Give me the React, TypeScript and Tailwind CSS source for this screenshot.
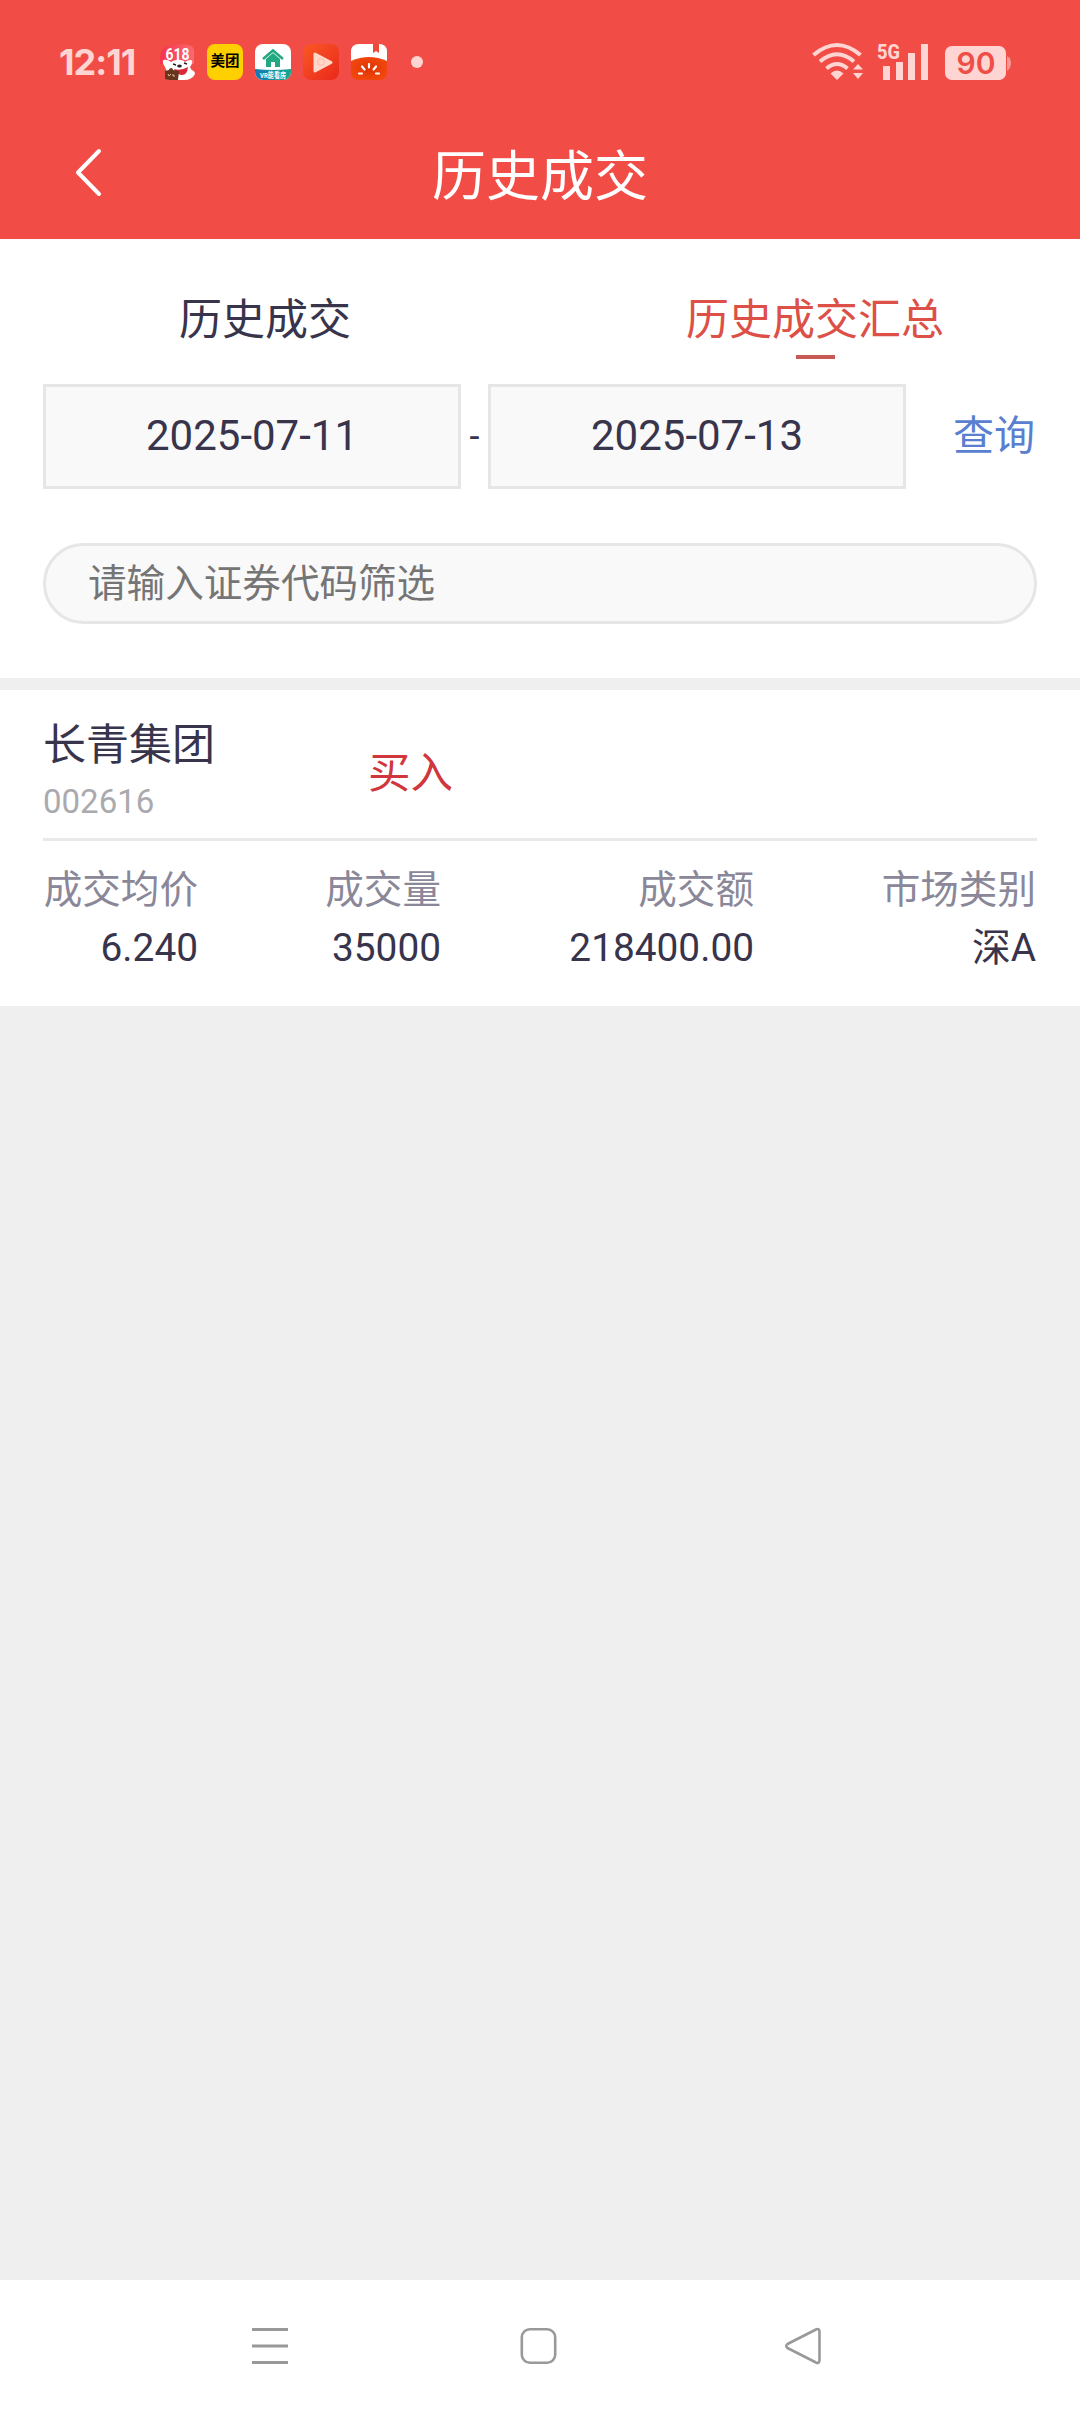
import { useState } from "react";

interface Trade {
  name: string;
  code: string;
  side: string;
  avgPrice: string;
  volume: string;
  amount: string;
  market: string;
}

const TABS = ["历史成交", "历史成交汇总"];

const trades: Trade[] = [
  {
    name: "长青集团",
    code: "002616",
    side: "买入",
    avgPrice: "6.240",
    volume: "35000",
    amount: "218400.00",
    market: "深A",
  },
];

const AppIcons = () => (
  <div className="flex gap-3">
    <svg width="36" height="36" viewBox="0 0 36 36">
      <defs>
        <linearGradient id="sale" x1="0" y1="0" x2="1" y2="0">
          <stop offset="0" stopColor="#f5324c" />
          <stop offset="1" stopColor="#fb6a70" />
        </linearGradient>
      </defs>
      <path d="M8 2Q18-1 29 1Q36 2 35 10V20H1Q0 5 8 2Z" fill="url(#sale)" />
      <path d="M6 23C0 14 8 15 12 18C17 15 23 15 26 18C32 14 36 16 31 23C32 27 36 26 36 30Q33 36 25 36H10Q5 34 8 28Z" fill="#fff" />
      <text x="18.500" y="16" textAnchor="middle" fontSize="16" fontWeight="700" fill="#fff" textLength="24" lengthAdjust="spacingAndGlyphs" className="font-['Roboto']">618</text>
      <ellipse cx="20.500" cy="22" rx="2.300" ry="1.500" fill="#222" />
      <path d="M14 20l3 1M25 19l3 1" stroke="#222" strokeWidth="1.400" />
      <path d="M15 25Q22 27 29 23Q28 32 22 31Q17 30 15 25Z" fill="#dd2836" />
      <path d="M6 27l4-1q0-2 3-2l1 2 6 1-1 9q-7 1-13-1Z" fill="#65351e" />
      <path d="M9 30l1 2 2-2m2 0v2h2" fill="none" stroke="#e8bd91" />
    </svg>
    <div className="flex h-9 w-9 items-center justify-center rounded-[8px] bg-[#ffd000] text-[14.500px] leading-none font-bold text-black">
      美团
    </div>
    <svg width="36" height="36" viewBox="0 0 36 36">
      <defs>
        <linearGradient id="vr">
          <stop offset="0" stopColor="#1777b4" />
          <stop offset="1" stopColor="#15a88e" />
        </linearGradient>
        <clipPath id="round"><rect width="36" height="36" rx="8" /></clipPath>
      </defs>
      <g clipPath="url(#round)">
        <rect width="36" height="36" fill="#fff" />
        <path d="M0 25Q18 27 36 25V36H0Z" fill="url(#vr)" />
        <path d="M8 15L18 6.500L28 15" fill="none" stroke="#22a982" strokeWidth="2.500" />
        <path d="M11 15L18 9L25 15V23H20V18H16V23H11Z" fill="#22a982" />
        <text x="18" y="34" textAnchor="middle" fontSize="7.500" fontWeight="700" fill="#fff" textLength="26" lengthAdjust="spacingAndGlyphs">VR能看房</text>
      </g>
    </svg>
    <svg width="36" height="36" viewBox="0 0 36 36">
      <defs>
        <linearGradient id="play" x1="0" y1="0" x2="1" y2="1">
          <stop offset="0" stopColor="#fa5825" />
          <stop offset="1" stopColor="#e9281c" />
        </linearGradient>
      </defs>
      <rect width="36" height="36" rx="8" fill="url(#play)" />
      <path d="M12 10V27L28 18.500Z" fill="#ffd8ca" stroke="#ffd8ca" strokeWidth="3" strokeLinejoin="round" />
      <circle cx="18" cy="18" r="3.500" fill="none" stroke="#ffb9a6" />
    </svg>
    <svg width="36" height="36" viewBox="0 0 36 36">
      <defs>
        <radialGradient id="tomato">
          <stop offset="0" stopColor="#df3200" />
          <stop offset="1" stopColor="#f0470e" />
        </radialGradient>
      </defs>
      <path d="M0 18V8Q0 0 8 0H28Q36 0 36 8V18Z" fill="#fff" />
      <path d="M0 17Q18 9 36 17V28Q36 36 28 36H8Q0 36 0 28Z" fill="url(#tomato)" />
      <path d="M22 0H28V9L25 7L22 9Z" fill="#ed4b36" />
      <path d="M8 29.500H11M25 29.500H28M11 22.500L13.500 25.500M25 22.500L22.500 25.500M18 20V23.500" stroke="#fff" strokeWidth="2.200" strokeLinecap="round" />
    </svg>
  </div>
);

const StatusBar = () => (
  <div className="flex h-[124px] items-center pr-[68px] pl-[59px] text-[#ffd5d3]">
    <span className="w-[100px] font-['Inter'] text-[36px] leading-none font-bold tracking-[-1px]">
      12:11
    </span>
    <AppIcons />
    <span className="ml-6 h-3 w-3 rounded-full bg-[#ffd5d3]" />
    <svg className="ml-auto" width="200" height="48" viewBox="0 -4 200 48">
      <g fill="none" stroke="currentColor" strokeWidth="4">
        <path d="M1.500 13Q25-7 48.500 13" />
        <path d="M8 19.500Q25 5 42 19.500" />
        <path d="M14.500 26.500Q25 17.500 35.500 26.500" />
      </g>
      <path d="M18.500 31.500Q25 25.500 31.500 31.500L25 38Z" fill="currentColor" />
      <path d="M46 22L51 27.500H41ZM41 31H51L46 37Z" fill="currentColor" />
      <text x="65" y="17" fontSize="21" fontWeight="800" fill="currentColor" textLength="23" lengthAdjust="spacingAndGlyphs" className="font-['Roboto']">5G</text>
      <path d="M71 24h7v14h-7zM84 20h7v18h-7zM96 11h7v27h-7zM109 2h7v36h-7z" fill="currentColor" />
      <rect x="133" y="4" width="61" height="34" rx="7" fill="currentColor" />
      <path d="M195 14Q199 16 199 21T195 29Z" fill="#f79793" />
      <text x="164" y="32" textAnchor="middle" fontSize="30" fontWeight="600" fill="#ef4d46" className="font-['Inter']">90</text>
    </svg>
  </div>
);

const Header = () => (
  <header className="h-[239px] bg-[#f14d46]">
    <StatusBar />
    <div className="grid h-[102px] grid-cols-3 items-center px-[74px] text-white">
      <button className="w-8 pb-1">
        <svg width="30" height="50" viewBox="0 0 30 50" fill="none" stroke="currentColor" strokeWidth="4" strokeLinecap="round" strokeLinejoin="round">
          <path d="M25 3L4 24.500L25 46" />
        </svg>
      </button>
      <h1 className="pt-[5px] text-center text-[54px] leading-none">历史成交</h1>
    </div>
  </header>
);

const Field = ({ label, value }: { label: string; value: string }) => (
  <div className="flex flex-col items-end">
    <span className="text-[38.600px] leading-[58px] text-[#8a8798]">{label}</span>
    <span className="text-[38.800px] leading-[57px]">{value}</span>
  </div>
);

const TradeCard = ({ trade }: { trade: Trade }) => (
  <section className="h-[316px] bg-white px-[43px]">
    <div className="flex h-[151px] items-center border-b-[3px] border-[#e9e9e9]">
      <div className="flex w-[325px] flex-col pt-[15px]">
        <span className="text-[43px] leading-[60px]">{trade.name}</span>
        <span className="text-[33px] leading-[54px] text-[#aaaaae]">{trade.code}</span>
      </div>
      <span className="pt-[20px] text-[42.500px] text-[#d0363c]">{trade.side}</span>
    </div>
    <div className="grid grid-cols-[155px_243px_313px_282px] pt-[20px]">
      <Field label="成交均价" value={trade.avgPrice} />
      <Field label="成交量" value={trade.volume} />
      <Field label="成交额" value={trade.amount} />
      <Field label="市场类别" value={trade.market} />
    </div>
  </section>
);

const NavBar = () => (
  <nav className="flex h-[132px] items-center justify-between bg-white pr-[257px] pl-[250px]">
    <svg width="40" height="40" viewBox="0 0 40 40" stroke="#999" strokeWidth="3">
      <path d="M2 3.500H38M2 20H38M2 36.500H38" />
    </svg>
    <svg width="40" height="40" viewBox="0 0 40 40" fill="none" stroke="#999" strokeWidth="2.600">
      <rect x="4.800" y="3.300" width="33.400" height="33.400" rx="8" />
    </svg>
    <svg width="40" height="40" viewBox="0 0 40 40" fill="none" stroke="#999" strokeWidth="2.600" strokeLinejoin="round">
      <path d="M4.500 18L33 3.500Q36.500 2 36.500 6V34Q36.500 38 33 36.500L4.500 22Q2 20 4.500 18Z" />
    </svg>
  </nav>
);

const App = () => {
  const [activeTab, setActiveTab] = useState(1);
  const [keyword, setKeyword] = useState("");

  return (
    <div className="flex h-[2412px] w-[1080px] flex-col bg-[#efefef] font-['Roboto','Noto_Sans_CJK_SC',sans-serif] text-[#37344b]">
      <Header />
      <section className="h-[439px] bg-white">
        <div className="grid h-[145px] grid-cols-2 gap-5">
          {TABS.map((tab, index) => (
            <button
              key={tab}
              className={`flex flex-col items-center pt-[51px] text-[43px] leading-[60px] ${
                activeTab === index ? "text-[#dc5048]" : ""
              }`}
              onClick={() => setActiveTab(index)}
            >
              {tab}
              {activeTab === index && (
                <span className="mt-[5px] h-1 w-[39px] bg-[#c95955]" />
              )}
            </button>
          ))}
        </div>
        <div className="flex h-[105px] items-center pr-[45px] pl-[43px] text-[42px]">
          <div className="flex h-full w-[418px] items-center justify-center border-[3px] border-[#e6e6e6] bg-[#f9f9f9] pb-[2px]">
            2025-07-11
          </div>
          <span className="w-[27px] text-center text-[36px]">-</span>
          <div className="flex h-full w-[418px] items-center justify-center border-[3px] border-[#e6e6e6] bg-[#f9f9f9] pb-[2px]">
            2025-07-13
          </div>
          <button className="ml-auto text-[41px] text-[#5a7fd0]">查询</button>
        </div>
        <input
          type="text"
          placeholder="请输入证券代码筛选"
          className="mx-[43px] mt-[54px] block h-[81px] w-[994px] rounded-full border-[3px] border-[#e6e6e6] bg-[#f9f9f9] px-[42px] text-[38.600px] placeholder:text-[#757575]"
          value={keyword}
          onChange={(e) => setKeyword(e.target.value)}
        />
      </section>
      <main className="flex-1 pt-3">
        {trades.map((trade) => (
          <TradeCard key={trade.code} trade={trade} />
        ))}
      </main>
      <NavBar />
    </div>
  );
};

export default App;
